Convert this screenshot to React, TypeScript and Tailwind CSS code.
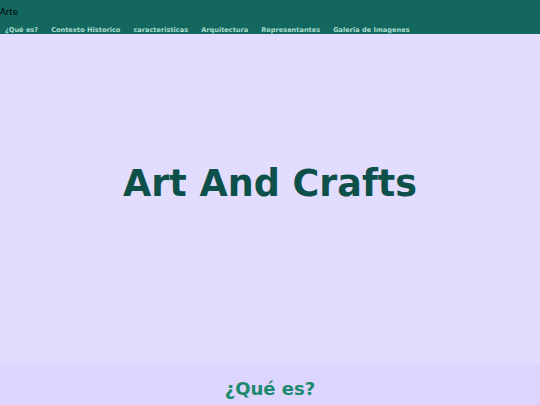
import React from "react";

export default function App() {
  const links = [
    "¿Qué es?",
    "Contexto Historico",
    "caracteristicas",
    "Arquitectura",
    "Representantes",
    "Galeria de Imagenes",
  ];
  return (
    <div className="w-[540px] h-[405px] overflow-hidden" style={{ fontFamily: '"DejaVu Sans", Verdana, sans-serif' }}>
      <header className="bg-[#13675e] h-[34px] flex flex-col">
        <div className="text-[8.5px] leading-[10px] text-black pt-[7px]">Arte</div>
        <nav className="flex gap-[13px] pl-[5px] mt-[9px]">
          {links.map((l) => (
            <a key={l} className="text-[6.6px] leading-[8px] font-bold text-[#a9dccd]">
              {l}
            </a>
          ))}
        </nav>
      </header>
      <section className="bg-[#e2dcff] h-[329px] flex items-center justify-center pb-[28px]">
        <h1 className="text-[36.5px] font-bold text-[#0c5049] leading-none">Art And Crafts</h1>
      </section>
      <section className="bg-[#dcd6fe] h-[100px] flex justify-center pt-[17px]">
        <h2 className="text-[18px] font-bold text-[#1b8a6c] leading-none">¿Qué es?</h2>
      </section>
    </div>
  );
}
